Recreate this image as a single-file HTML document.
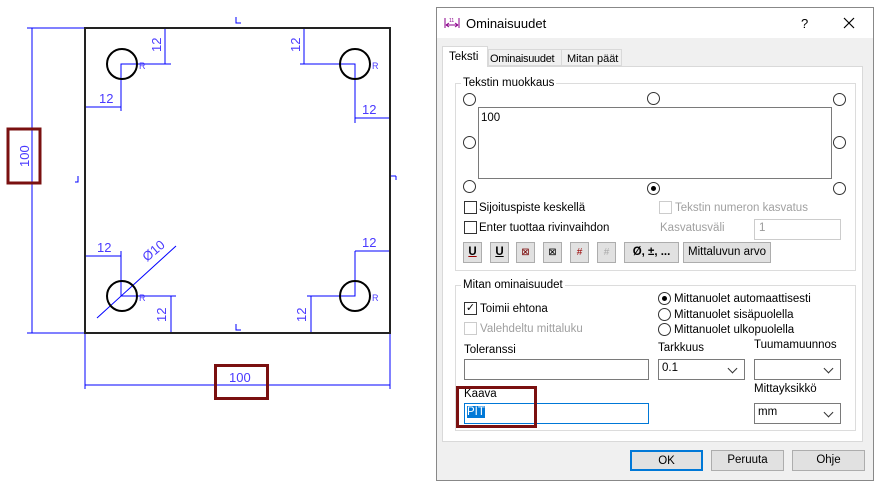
<!DOCTYPE html>
<html><head><meta charset="utf-8"><style>
*{margin:0;padding:0;box-sizing:border-box}
body{width:876px;height:485px;background:#fff;position:relative;overflow:hidden;font-family:"Liberation Sans",sans-serif;font-size:11.5px;color:#000}
.a{position:absolute}
.t{position:absolute;font-size:11.5px;white-space:nowrap;line-height:14px}
.rb{position:absolute;width:13px;height:13px;border:1px solid #333;border-radius:50%;background:#fff}
.cb{position:absolute;width:13px;height:13px;border:1px solid #333;background:#fff}
.in{position:absolute;border:1px solid #7a7a7a;background:#fff;height:21px}
.btn{position:absolute;border:1px solid #adadad;background:#e1e1e1;height:21px;text-align:center;line-height:19px;font-size:11.5px}
.grp{position:absolute;border:1px solid #dcdcdc}
.gl{position:absolute;background:#fff;padding:0 2px;font-size:11.5px;line-height:14px}
.sel::after{content:"";position:absolute;right:8px;top:5px;width:6px;height:6px;border-right:1px solid #333;border-bottom:1px solid #333;transform:rotate(45deg)}
.dis{color:#a0a0a0}
</style></head><body>
<svg class="a" style="left:0;top:0" width="436" height="485">
<g stroke="#0000ff" stroke-width="1" fill="none">
<line x1="27" y1="28" x2="85" y2="28"/><line x1="27" y1="333" x2="85" y2="333"/>
<line x1="32" y1="28" x2="32" y2="333"/>
<line x1="85" y1="333" x2="85" y2="389"/><line x1="390" y1="333" x2="390" y2="389"/>
<line x1="85" y1="385" x2="390" y2="385"/>
<polyline points="121,111 121,64 171,64"/><line x1="86" y1="107" x2="121" y2="107"/>
<line x1="165" y1="28" x2="165" y2="64"/>
<polyline points="300,64 355,64 355,123"/><line x1="355" y1="118" x2="389" y2="118"/>
<line x1="304" y1="28" x2="304" y2="64"/>
<polyline points="121,251 121,296 176,296"/><line x1="86" y1="256" x2="121" y2="256"/>
<line x1="171" y1="296" x2="171" y2="333"/>
<polyline points="307,296 355,296 355,251"/><line x1="355" y1="251" x2="389" y2="251"/>
<line x1="311" y1="296" x2="311" y2="333"/>
<line x1="97" y1="318" x2="176" y2="246"/>
<path d="M236 17v6h5M236 324v6h5M391 176h5M78 176v6h-3M396 176v4"/>
</g>
<g fill="none" stroke="#000" stroke-width="2">
<rect x="85" y="28" width="305" height="305" stroke="#222"/>
<circle cx="122" cy="64" r="15"/><circle cx="355" cy="64" r="15"/>
<circle cx="122" cy="296" r="15"/><circle cx="355" cy="296" r="15"/>
</g>
<g fill="#4a3aff" font-family="Liberation Sans" font-size="13">
<text x="99" y="103">12</text><text x="362" y="114">12</text>
<text x="97" y="252">12</text><text x="362" y="247">12</text>
<text transform="translate(161,52) rotate(-90)">12</text>
<text transform="translate(300,52) rotate(-90)">12</text>
<text transform="translate(166,322) rotate(-90)">12</text>
<text transform="translate(306,322) rotate(-90)">12</text>
<text transform="translate(147,262) rotate(-40)">Ø10</text>
<text transform="translate(29,167) rotate(-90)">100</text>
<text x="229" y="382">100</text>
<text x="139" y="69" font-size="9">R</text><text x="372" y="69" font-size="9">R</text>
<text x="139" y="301" font-size="9">R</text><text x="372" y="301" font-size="9">R</text>
</g>
<rect x="8" y="129" width="32" height="54" fill="none" stroke="#7a1010" stroke-width="3"/>
<rect x="215.5" y="365.5" width="52" height="33" fill="none" stroke="#7a1010" stroke-width="3"/>
</svg>

<div class="a" style="left:436px;top:7px;width:438px;height:474px;border:1px solid #888;background:#f0f0f0"></div>
<div class="a" style="left:437px;top:8px;width:436px;height:30px;background:#fff"></div>
<svg class="a" style="left:444px;top:17px" width="16" height="12"><path d="M1 1v10M15 1v10M2 8h12M2 8l3-2M2 8l3 2M14 8l-3-2M14 8l-3 2" stroke="#8b008b" fill="none"/><text x="5" y="5" font-size="5" fill="#8b008b" font-family="Liberation Sans">11</text></svg>
<div class="t" style="left:466px;top:17px;font-size:13px">Ominaisuudet</div>
<div class="t" style="left:801px;top:17px;font-size:13px">?</div>
<svg class="a" style="left:843px;top:17px" width="12" height="12"><path d="M1 1L11 11M11 1L1 11" stroke="#000" stroke-width="1.2"/></svg>

<div class="a" style="left:442px;top:66px;width:421px;height:376px;border:1px solid #d9d9d9;background:#fff"></div>
<div class="a" style="left:442px;top:46px;width:46px;height:21px;border:1px solid #d9d9d9;border-bottom:none;background:#fff"></div>
<div class="t" style="left:449px;top:50px">Teksti</div>
<div class="a" style="left:488px;top:49px;width:74px;height:17px;border:1px solid #d9d9d9;background:#f0f0f0"></div>
<div class="t" style="left:490px;top:52px;font-size:11px;letter-spacing:-0.3px">Ominaisuudet</div>
<div class="a" style="left:561px;top:49px;width:61px;height:17px;border:1px solid #d9d9d9;background:#f0f0f0"></div>
<div class="t" style="left:567px;top:52px;font-size:11px">Mitan päät</div>
<div class="a" style="left:443px;top:67px;width:419px;height:374px;background:#fff"></div>

<div class="grp" style="left:455px;top:83px;width:401px;height:188px"></div>
<div class="gl" style="left:461px;top:76px">Tekstin muokkaus</div>
<div class="rb" style="left:463px;top:93px"></div><div class="rb" style="left:647px;top:92px"></div><div class="rb" style="left:833px;top:93px"></div>
<div class="rb" style="left:463px;top:136px"></div><div class="rb" style="left:833px;top:136px"></div>
<div class="rb" style="left:463px;top:180px"></div>
<div class="rb" style="left:647px;top:182px"><div class="a" style="left:3px;top:3px;width:5px;height:5px;border-radius:50%;background:#000"></div></div>
<div class="rb" style="left:833px;top:182px"></div>
<div class="a" style="left:478px;top:107px;width:354px;height:72px;border:1px solid #7a7a7a;background:#fff"></div>
<div class="t" style="left:481px;top:111px">100</div>
<div class="cb" style="left:464px;top:201px"></div><div class="t" style="left:479px;top:201px">Sijoituspiste keskellä</div>
<div class="cb" style="left:464px;top:221px"></div><div class="t" style="left:479px;top:221px">Enter tuottaa rivinvaihdon</div>
<div class="cb" style="left:659px;top:201px;border-color:#ccc"></div><div class="t dis" style="left:675px;top:201px">Tekstin numeron kasvatus</div>
<div class="t dis" style="left:660px;top:221px">Kasvatusväli</div>
<div class="in" style="left:754px;top:219px;width:87px;border-color:#ccc;color:#999;padding:2px 4px">1</div>
<div class="btn" style="left:463px;top:242px;width:19px;font-weight:bold;text-decoration:underline;text-decoration-color:#900">U</div>
<div class="btn" style="left:490px;top:242px;width:19px;font-weight:bold;text-decoration:underline">U</div>
<div class="btn" style="left:516px;top:242px;width:19px;font-size:10px;color:#700">⊠</div>
<div class="btn" style="left:543px;top:242px;width:19px;font-size:10px">⊠</div>
<div class="btn" style="left:570px;top:242px;width:19px;font-size:10px;color:#900">#</div>
<div class="btn" style="left:597px;top:242px;width:19px;font-size:10px;color:#aaa">#</div>
<div class="btn" style="left:624px;top:242px;width:55px;font-weight:bold">Ø, ±, ...</div>
<div class="btn" style="left:683px;top:242px;width:88px">Mittaluvun arvo</div>

<div class="grp" style="left:455px;top:285px;width:401px;height:146px"></div>
<div class="gl" style="left:461px;top:278px">Mitan ominaisuudet</div>
<div class="cb" style="left:464px;top:302px;font-size:11px;line-height:11px;text-align:center">✓</div><div class="t" style="left:480px;top:302px">Toimii ehtona</div>
<div class="cb" style="left:464px;top:322px;border-color:#ccc"></div><div class="t dis" style="left:480px;top:322px">Valehdeltu mittaluku</div>
<div class="rb" style="left:658px;top:292px"><div class="a" style="left:3px;top:3px;width:5px;height:5px;border-radius:50%;background:#000"></div></div>
<div class="t" style="left:674px;top:292px">Mittanuolet automaattisesti</div>
<div class="rb" style="left:658px;top:308px"></div><div class="t" style="left:674px;top:308px">Mittanuolet sisäpuolella</div>
<div class="rb" style="left:658px;top:323px"></div><div class="t" style="left:674px;top:323px">Mittanuolet ulkopuolella</div>
<div class="t" style="left:464px;top:343px">Toleranssi</div>
<div class="in" style="left:464px;top:359px;width:185px"></div>
<div class="t" style="left:658px;top:341px">Tarkkuus</div>
<div class="in sel" style="left:658px;top:359px;width:87px;padding:2px 3px">0.1</div>
<div class="t" style="left:754px;top:338px">Tuumamuunnos</div>
<div class="in sel" style="left:754px;top:359px;width:87px"></div>
<div class="t" style="left:464px;top:387px">Kaava</div>
<div class="in" style="left:464px;top:403px;width:185px;border-color:#0078d7;padding:2px 2px"><span style="background:#0078d7;color:#fff">PIT</span></div>
<div class="t" style="left:754px;top:382px">Mittayksikkö</div>
<div class="in sel" style="left:754px;top:403px;width:87px;padding:2px 3px">mm</div>
<div class="a" style="left:456px;top:386px;width:81px;height:42px;border:3px solid #7a1010"></div>

<div class="btn" style="left:630px;top:450px;width:73px;border:2px solid #0078d7">OK</div>
<div class="btn" style="left:711px;top:450px;width:73px">Peruuta</div>
<div class="btn" style="left:792px;top:450px;width:73px">Ohje</div>
</body></html>
